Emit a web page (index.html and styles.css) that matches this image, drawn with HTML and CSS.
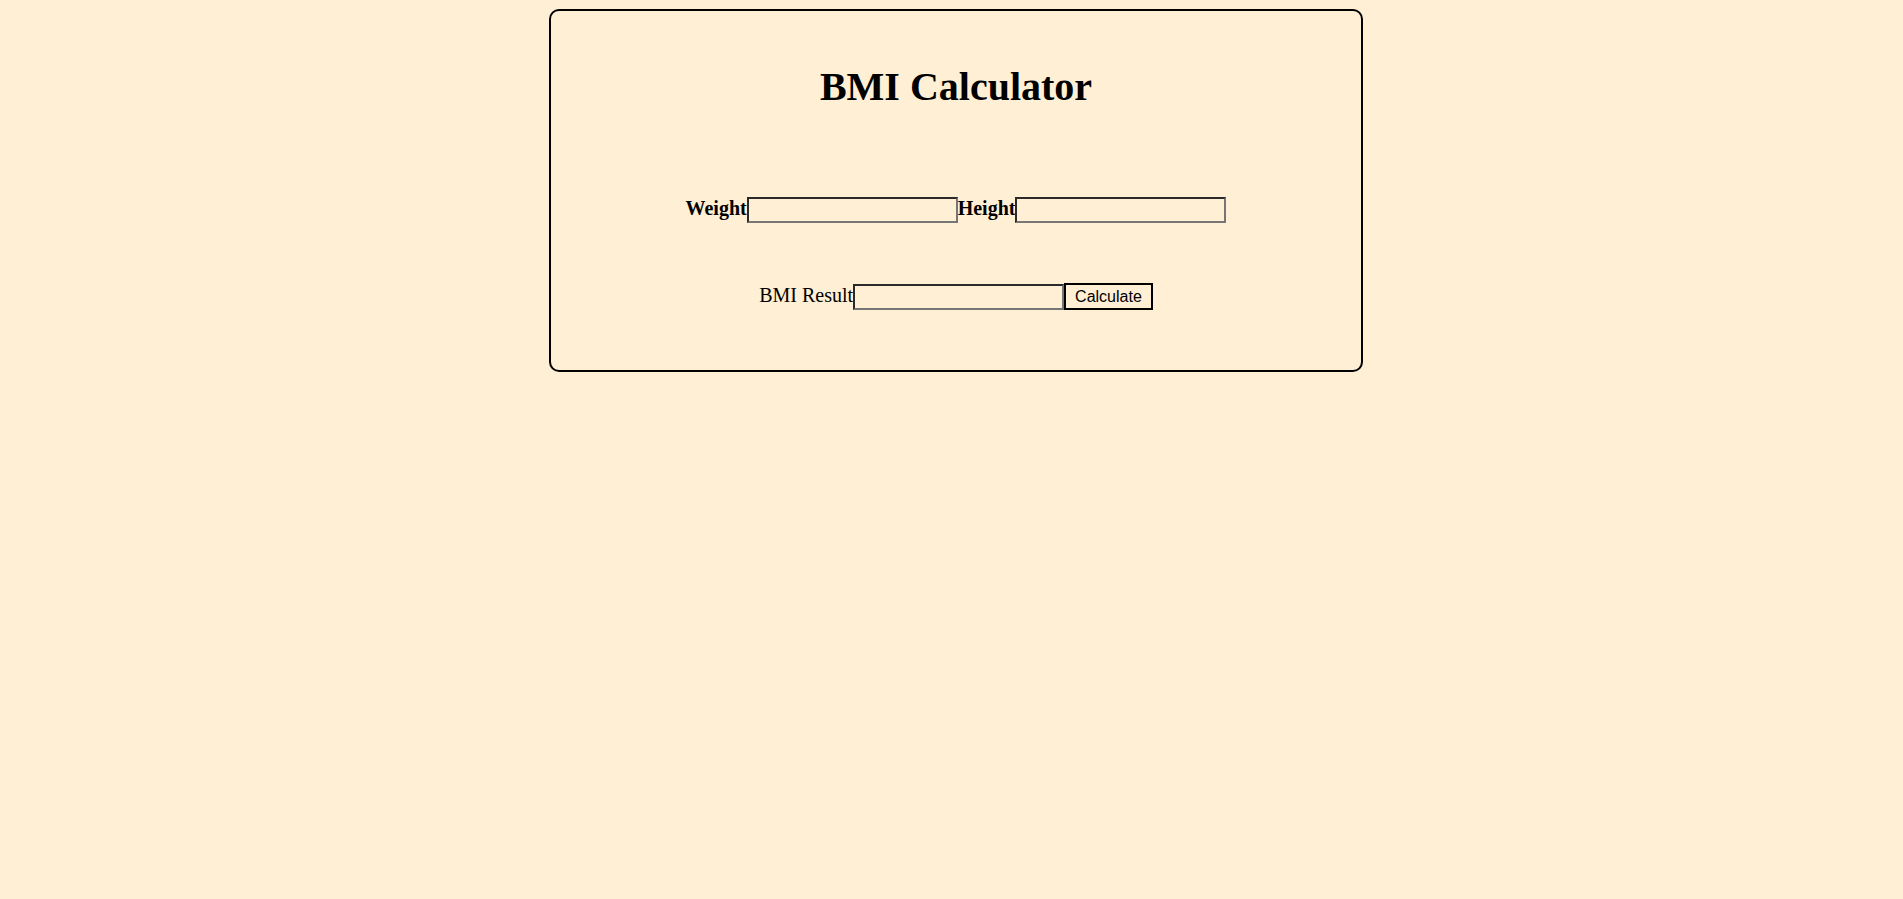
FILE: index.html
```html
<!DOCTYPE html>
<html lang="en">
<head>
<meta charset="utf-8">
<title>BMI Calculator</title>
<link rel="stylesheet" href="styles.css">
</head>
<body>
  <div class="card">
    <h1 class="title">BMI Calculator</h1>
    <div class="row row-inputs">
      <label class="label label-bold" for="weight">Weight</label>
      <input class="field" id="weight" type="text">
      <label class="label label-bold" for="height">Height</label>
      <input class="field" id="height" type="text">
    </div>
    <div class="row row-result">
      <label class="label" for="result">BMI Result</label>
      <input class="field" id="result" type="text">
      <button class="btn" type="button">Calculate</button>
    </div>
  </div>
</body>
</html>
```

FILE: styles.css
```css
html, body {
  margin: 0;
  background: #ffefd5;
}

body {
  padding: 9px 0 0 9px;
  font-family: "Liberation Serif", "Times New Roman", serif;
  color: #000;
}

.card {
  box-sizing: border-box;
  width: 814px;
  margin: 0 auto;
  border: 2px solid #000;
  border-radius: 10px;
  padding: 53px 0 60px;
  display: flex;
  flex-direction: column;
  align-items: center;
}

.title {
  margin: 0 0 87px;
  font-size: 40px;
  line-height: 46px;
  font-weight: bold;
  text-align: center;
}

.row {
  display: flex;
  justify-content: center;
  align-items: flex-start;
}

.row-inputs {
  margin-bottom: 61px;
}

.label {
  font-size: 20px;
  line-height: 23px;
  font-weight: normal;
}

.label-bold {
  font-weight: bold;
}

.field {
  box-sizing: border-box;
  width: 211px;
  height: 26px;
  margin: 0;
  padding: 1px 2px;
  background: transparent;
  border-style: solid;
  border-width: 2px;
  border-color: #2a2a2a #767676 #767676 #2a2a2a;
  font-family: "Liberation Sans", Arial, sans-serif;
  font-size: 16px;
}

.btn {
  box-sizing: border-box;
  height: 27px;
  margin: -1px 0 -1px;
  padding: 0 9px;
  background: transparent;
  border: 2px solid #000;
  font-family: "Liberation Sans", Arial, sans-serif;
  font-size: 16px;
  color: #000;
  line-height: 21px;
}
```
